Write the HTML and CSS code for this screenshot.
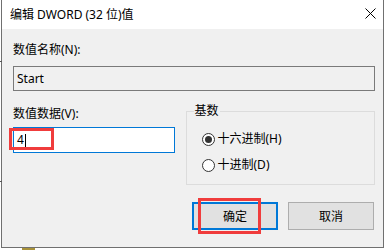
FILE: index.html
```html
<!DOCTYPE html>
<html lang="zh-CN">
<head>
<meta charset="utf-8">
<title>编辑 DWORD (32 位)值</title>
<link rel="stylesheet" href="styles.css">
</head>
<body>
<span class="tick tick-a"></span>
<span class="tick tick-b"></span>
<div class="window">
  <div class="titlebar">
    <span class="title">编辑 DWORD (32 位)值</span>
    <svg class="close" width="11" height="11" viewBox="0 0 11 11"><path d="M0.5 0.5L10.5 10.5M10.5 0.5L0.5 10.5" stroke="#000" stroke-width="1" fill="none"/></svg>
  </div>
  <div class="content">
    <div class="label first">数值名称(N):</div>
    <div class="field readonly">Start</div>
    <div class="row">
      <div class="col">
        <div class="label">数值数据(V):</div>
        <div class="field edit"><span class="val">4</span><span class="caret"></span><span class="mark mark-input"></span></div>
      </div>
      <div class="group">
        <span class="legend">基数</span>
        <div class="radio r1"><span class="dot checked"></span>十六进制(H)</div>
        <div class="radio r2"><span class="dot"></span>十进制(D)</div>
      </div>
    </div>
    <div class="buttons">
      <div class="btn default">确定<span class="mark mark-btn"></span></div>
      <div class="btn">取消</div>
    </div>
  </div>
</div>
<div class="strip"></div>
</body>
</html>
```
FILE: styles.css
```css
html, body {
  margin: 0;
  padding: 0;
}
body {
  width: 386px;
  height: 250px;
  overflow: hidden;
  background: #ffffff;
  position: relative;
  font-family: "Noto Sans", "Noto Sans CJK SC", sans-serif;
  font-size: 12px;
  color: #000;
}
.tick {
  position: absolute;
  left: 0;
  width: 2px;
  height: 1px;
  background: #555;
}
.tick-a { top: 61px; }
.tick-b { top: 181px; }
.window {
  margin-left: 1px;
  width: 381px;
  border: 1px solid #707070;
  border-top: none;
}
.titlebar {
  height: 29px;
  background: #fff;
  display: flex;
  align-items: center;
  justify-content: space-between;
  padding: 0 7px 0 8px;
}
.title {
  line-height: 16px;
}
.close {
  display: block;
  margin-top: -2px;
}
.content {
  height: 218px;
  box-sizing: border-box;
  background: #f0f0f0;
  padding: 0 8px 0 11px;
  overflow: hidden;
}
.label {
  line-height: 16px;
  height: 16px;
}
.label.first {
  padding-top: 13px;
}
.field {
  box-sizing: border-box;
  line-height: 23px;
  padding-left: 3px;
  position: relative;
}
.readonly {
  margin-top: 8px;
  height: 25px;
  border: 1px solid #7a7a7a;
  background: #f0f0f0;
}
.row {
  display: flex;
  margin-top: 15px;
}
.col {
  width: 162px;
}
.edit {
  margin-top: 5px;
  height: 26px;
  border: 1px solid #0078d7;
  background: #fff;
  line-height: 24px;
  display: flex;
  align-items: center;
}
.caret {
  display: inline-block;
  width: 1px;
  height: 13px;
  background: #000;
  margin-left: 1px;
}
.mark {
  position: absolute;
  border: 3px solid #f03c3c;
  box-sizing: border-box;
}
.mark-input {
  left: -5px;
  top: 0px;
  width: 45px;
  height: 22px;
}
.group {
  position: relative;
  margin-left: 11px;
  margin-top: 5px;
  width: 190px;
  height: 74px;
  box-sizing: border-box;
  border: 1px solid #dcdcdc;
  padding-left: 15px;
}
.legend {
  position: absolute;
  left: 7px;
  top: -9px;
  padding: 0 1px;
  background: #f0f0f0;
  line-height: 16px;
}
.radio {
  display: flex;
  align-items: center;
  height: 16px;
  line-height: 16px;
}
.r1 { margin-top: 19px; }
.r2 { margin-top: 10px; }
.dot {
  width: 13px;
  height: 13px;
  box-sizing: border-box;
  border: 1px solid #333;
  border-radius: 50%;
  background: #fff;
  margin-right: 3px;
  display: flex;
  align-items: center;
  justify-content: center;
}
.dot.checked::after {
  content: "";
  width: 7px;
  height: 7px;
  border-radius: 50%;
  background: #333;
}
.buttons {
  display: flex;
  justify-content: flex-end;
  gap: 10px;
  margin-top: 17px;
  padding-right: 1px;
}
.btn {
  position: relative;
  width: 86px;
  height: 28px;
  box-sizing: border-box;
  border: 1px solid #adadad;
  background: #e1e1e1;
  display: flex;
  align-items: center;
  justify-content: center;
}
.btn.default {
  border: 2px solid #0078d7;
}
.mark-btn {
  left: 4px;
  top: -6px;
  width: 63px;
  height: 36px;
}
.strip {
  margin-left: 22px;
  width: 13px;
  height: 2px;
  background: #a8923a;
}
```
